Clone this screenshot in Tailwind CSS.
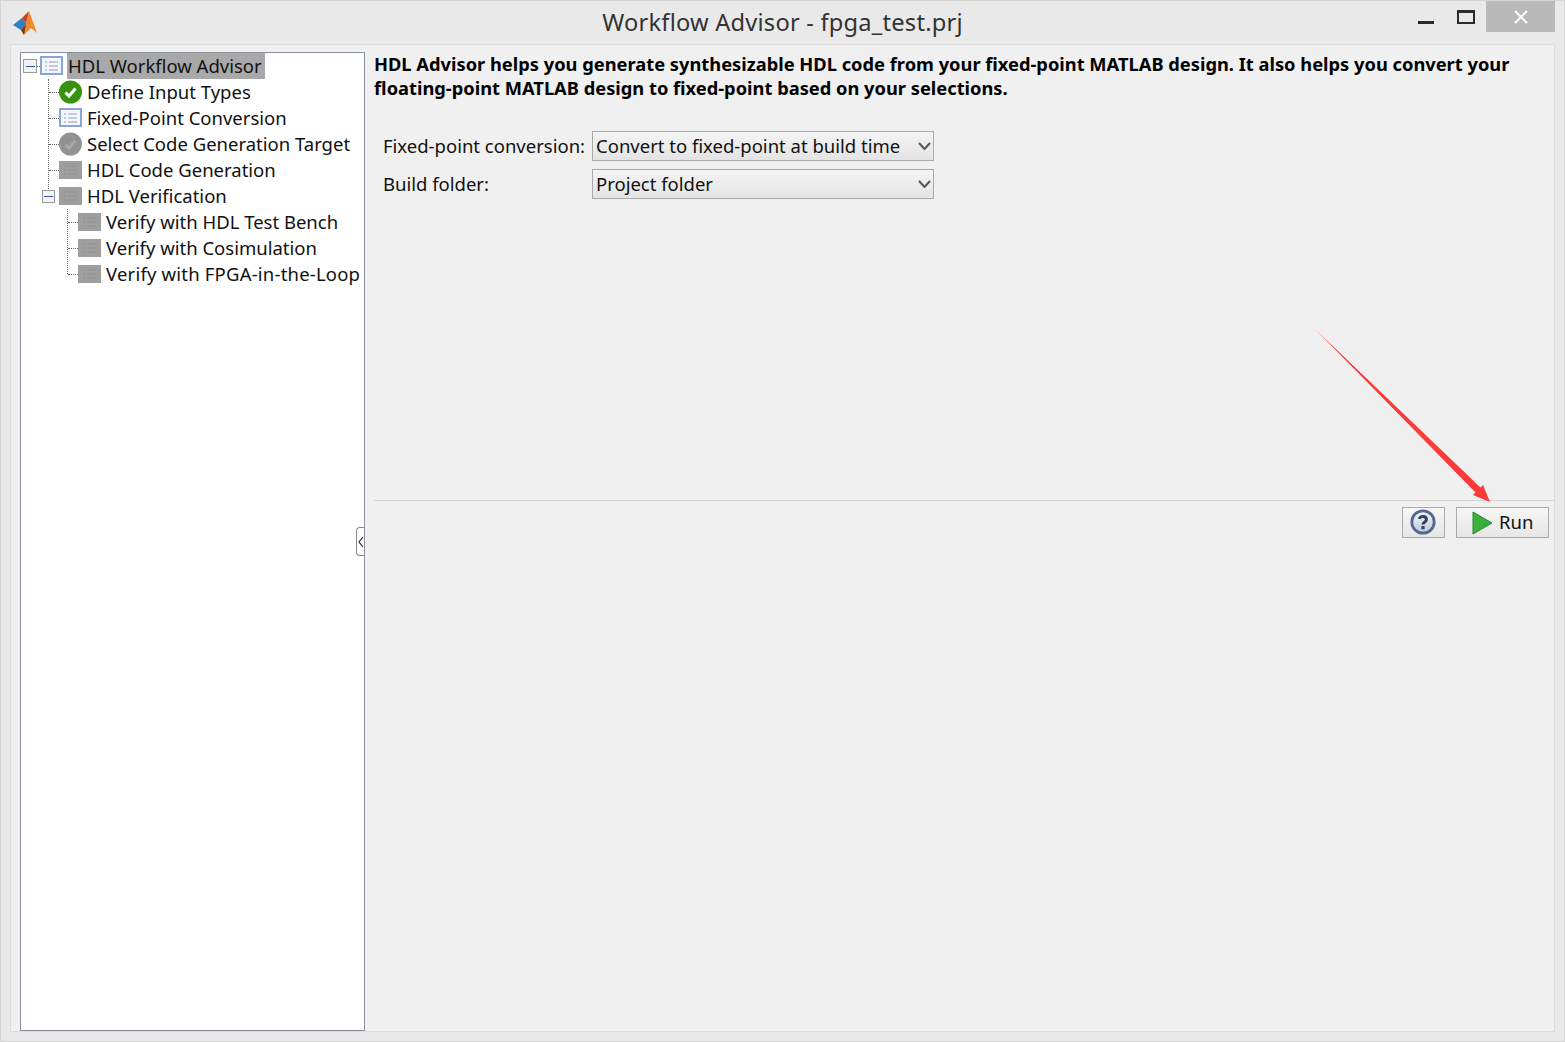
<!DOCTYPE html>
<html lang="en">
  <head>
    <meta charset="UTF-8" />
    <title>Workflow Advisor - fpga_test.prj</title>
    <script src="https://cdn.jsdelivr.net/npm/@tailwindcss/browser@4"></script>
  </head>
  <body class="overflow-hidden bg-[#e9e9e9]">
    <div class="relative h-[1042px] w-[1565px] border border-[#d4d4d4] bg-[#e9e9e9] font-['Noto_Sans',sans-serif] text-[#111]">
      <!-- title bar -->
      <div class="relative flex h-[43px] items-center justify-center">
        <svg class="absolute left-[11px] top-[9px] h-[26px] w-[26px] blur-[0.5px]" viewBox="0 0 26 26">
          <path d="M1 15 L10 8 L14 14 L9 20Z" fill="#2f7fc1" />
          <path d="M10 8 L17 1 L14 14Z" fill="#c9421d" />
          <path d="M17 1 L25 23 L19 18 L12 25 L9 20 L14 14Z" fill="#ef8a2c" />
          <path d="M14 14 L12 25 L9 20Z" fill="#7a3a22" />
        </svg>
        <span class="whitespace-nowrap text-[23.7px] leading-none tracking-[0.2px] text-[#333]">Workflow Advisor - fpga_test.prj</span>
        <div class="absolute right-[130px] top-[20px] h-[3px] w-[16px] bg-[#2b2b2b]"></div>
        <div class="absolute right-[89px] top-[9px] h-[14px] w-[18px] border-2 border-t-[3px] border-[#2b2b2b]"></div>
        <div class="absolute right-[9px] top-0 flex h-[31px] w-[69px] items-center justify-center bg-[#b9b9b9]">
          <svg class="h-[14px] w-[14px]" viewBox="0 0 14 14"><path d="M1 1 L13 13 M13 1 L1 13" stroke="#fff" stroke-width="2" /></svg>
        </div>
      </div>

      <!-- client area -->
      <div class="relative mx-[9px] flex h-[988px] w-[1545px] border border-[#dcdcdc] bg-[#f0f0f0] pl-[9px]">
        <!-- tree -->
        <div class="relative mt-[7px] h-[979px] w-[345px] shrink-0 whitespace-nowrap border border-[#8a9099] bg-white text-[18.5px] leading-none">
          <div class="absolute left-[27px] top-[26px] h-[118px] border-l border-dotted border-[#666]"></div>
          <div class="absolute left-[46px] top-[156px] h-[65px] border-l border-dotted border-[#666]"></div>

          <div class="relative flex h-[26px] items-center pl-[2px]">
            <div class="flex h-[14px] w-[14px] items-center justify-center border border-[#9a9a9a] bg-[#f4f4f4]"><div class="h-px w-[9px] bg-[#2f56a8]"></div></div>
            <div class="w-[3px] border-t border-dotted border-[#666]"></div>
            <svg class="h-[20px] w-[24px] blur-[0.3px]" viewBox="0 0 24 20"><rect x="1" y="1" width="21" height="17" fill="#f3f6fc" stroke="#8ba5d6" stroke-width="2" /><path d="M5 6h2M5 10h2M5 14h2M9 6h9M9 10h9M9 14h9" stroke="#c3cbdb" stroke-width="2" /></svg>
            <span class="ml-[3px] flex h-[26px] items-center bg-[#a9a9a9] pl-[1px] pr-[3px]">HDL Workflow Advisor</span>
          </div>

          <div class="relative flex h-[26px] items-center pl-[28px]">
            <div class="w-[10px] border-t border-dotted border-[#666]"></div>
            <svg class="h-[24px] w-[24px] blur-[0.3px]" viewBox="0 0 24 24"><circle cx="11.5" cy="12" r="11.5" fill="#37930f" /><path d="M6.5 12.5 L10 16 L16.5 8.5" fill="none" stroke="#fff" stroke-width="3" /></svg>
            <span class="ml-[4px]">Define Input Types</span>
          </div>

          <div class="relative flex h-[26px] items-center pl-[28px]">
            <div class="w-[10px] border-t border-dotted border-[#666]"></div>
            <svg class="h-[20px] w-[24px] blur-[0.3px]" viewBox="0 0 24 20"><rect x="1" y="1" width="21" height="17" fill="#f3f6fc" stroke="#8ba5d6" stroke-width="2" /><path d="M5 6h2M5 10h2M5 14h2M9 6h9M9 10h9M9 14h9" stroke="#c3cbdb" stroke-width="2" /></svg>
            <span class="ml-[4px]">Fixed-Point Conversion</span>
          </div>

          <div class="relative flex h-[26px] items-center pl-[28px]">
            <div class="w-[10px] border-t border-dotted border-[#666]"></div>
            <svg class="h-[24px] w-[24px] blur-[0.3px]" viewBox="0 0 24 24"><circle cx="11.5" cy="12" r="11.5" fill="#929292" /><path d="M6.5 12.5 L10 16 L16.5 8.5" fill="none" stroke="#a8a8a8" stroke-width="3" /></svg>
            <span class="ml-[4px]">Select Code Generation Target</span>
          </div>

          <div class="relative flex h-[26px] items-center pl-[28px]">
            <div class="w-[10px] border-t border-dotted border-[#666]"></div>
            <svg class="h-[20px] w-[24px] blur-[0.3px]" viewBox="0 0 24 20"><rect x="0" y="1" width="23" height="18" fill="#9e9e9e" /><path d="M5 6h2M5 10h2M5 14h2M9 6h9M9 10h9M9 14h9" stroke="#979797" stroke-width="2" /></svg>
            <span class="ml-[4px]">HDL Code Generation</span>
          </div>

          <div class="relative flex h-[26px] items-center pl-[21px]">
            <div class="flex h-[13px] w-[13px] items-center justify-center border border-[#9a9a9a] bg-[#f4f4f4]"><div class="h-px w-[9px] bg-[#2f56a8]"></div></div>
            <div class="w-[4px]"></div>
            <svg class="h-[20px] w-[24px] blur-[0.3px]" viewBox="0 0 24 20"><rect x="0" y="1" width="23" height="18" fill="#9e9e9e" /><path d="M5 6h2M5 10h2M5 14h2M9 6h9M9 10h9M9 14h9" stroke="#979797" stroke-width="2" /></svg>
            <span class="ml-[4px]">HDL Verification</span>
          </div>

          <div class="relative flex h-[26px] items-center pl-[47px]">
            <div class="w-[10px] border-t border-dotted border-[#666]"></div>
            <svg class="h-[20px] w-[24px] blur-[0.3px]" viewBox="0 0 24 20"><rect x="0" y="1" width="23" height="18" fill="#9e9e9e" /><path d="M5 6h2M5 10h2M5 14h2M9 6h9M9 10h9M9 14h9" stroke="#979797" stroke-width="2" /></svg>
            <span class="ml-[4px]">Verify with HDL Test Bench</span>
          </div>

          <div class="relative flex h-[26px] items-center pl-[47px]">
            <div class="w-[10px] border-t border-dotted border-[#666]"></div>
            <svg class="h-[20px] w-[24px] blur-[0.3px]" viewBox="0 0 24 20"><rect x="0" y="1" width="23" height="18" fill="#9e9e9e" /><path d="M5 6h2M5 10h2M5 14h2M9 6h9M9 10h9M9 14h9" stroke="#979797" stroke-width="2" /></svg>
            <span class="ml-[4px]">Verify with Cosimulation</span>
          </div>

          <div class="relative flex h-[26px] items-center pl-[47px]">
            <div class="w-[10px] border-t border-dotted border-[#666]"></div>
            <svg class="h-[20px] w-[24px] blur-[0.3px]" viewBox="0 0 24 20"><rect x="0" y="1" width="23" height="18" fill="#9e9e9e" /><path d="M5 6h2M5 10h2M5 14h2M9 6h9M9 10h9M9 14h9" stroke="#979797" stroke-width="2" /></svg>
            <span class="ml-[4px] tracking-[0.2px]">Verify with FPGA-in-the-Loop</span>
          </div>

          <!-- splitter handle -->
          <div class="absolute right-0 top-[474px] flex h-[29px] w-[8px] items-center justify-center rounded-l-[4px] border border-r-0 border-[#888] bg-white">
            <svg class="h-[12px] w-[6px]" viewBox="0 0 6 12"><path d="M5 1 L1 6 L5 11" fill="none" stroke="#222" stroke-width="1.2" /></svg>
          </div>
        </div>

        <!-- right side -->
        <div class="flex min-w-0 flex-1 flex-col pl-[9px]">
          <p class="mt-[7px] h-[48px] w-[1150px] text-[18.3px] font-bold leading-[24px] text-black">HDL Advisor helps you generate synthesizable HDL code from your fixed-point MATLAB design. It also helps you convert your floating-point MATLAB design to fixed-point based on your selections.</p>

          <div class="mt-[31px] flex flex-col gap-[8px] whitespace-nowrap pl-[9px] text-[18.5px] leading-none">
            <div class="flex h-[30px] items-center">
              <span class="w-[209px] shrink-0">Fixed-point conversion:</span>
              <div class="flex h-[30px] w-[342px] items-center justify-between border border-[#aaa] bg-linear-to-b from-[#f4f4f4] to-[#e4e4e4] pl-[3px] pr-[2px]">
                <span>Convert to fixed-point at build time</span>
                <svg class="h-[8px] w-[13px]" viewBox="0 0 13 8"><path d="M1 1 L6.5 7 L12 1" fill="none" stroke="#555" stroke-width="2" /></svg>
              </div>
            </div>
            <div class="flex h-[30px] items-center">
              <span class="w-[209px] shrink-0">Build folder:</span>
              <div class="flex h-[30px] w-[342px] items-center justify-between border border-[#aaa] bg-linear-to-b from-[#f4f4f4] to-[#e4e4e4] pl-[3px] pr-[2px]">
                <span>Project folder</span>
                <svg class="h-[8px] w-[13px]" viewBox="0 0 13 8"><path d="M1 1 L6.5 7 L12 1" fill="none" stroke="#555" stroke-width="2" /></svg>
              </div>
            </div>
          </div>

          <div class="mt-[301px] h-px bg-[#d4d4d4]"></div>

          <div class="mt-[6px] flex justify-end gap-[11px] pr-[5px]">
            <div class="flex h-[31px] w-[43px] items-center justify-center border border-[#aaa] bg-linear-to-b from-[#f6f6f6] to-[#e6e6e6]">
              <svg class="mb-[1px] mr-[1px] h-[26px] w-[26px] blur-[0.3px]" viewBox="0 0 26 26">
                <defs>
                  <linearGradient id="helpFill" x1="0" y1="0" x2="0" y2="1"><stop offset="0" stop-color="#f4f7fa" /><stop offset="1" stop-color="#b9c9d8" /></linearGradient>
                </defs>
                <circle cx="13" cy="13" r="11.2" fill="url(#helpFill)" stroke="#4f6a8c" stroke-width="2.8" />
                <path d="M9.5 10 C9.5 6.5 16.5 6.5 16.5 10.5 C16.5 13 13 13 13 15.5" fill="none" stroke="#34445a" stroke-width="3" />
                <rect x="11.4" y="17" width="3.2" height="3.2" fill="#34445a" />
              </svg>
            </div>
            <div class="flex h-[31px] w-[93px] items-center border border-[#aaa] bg-linear-to-b from-[#f6f6f6] to-[#e6e6e6] pl-[15px] text-[18.5px] leading-none">
              <svg class="h-[24px] w-[21px]" viewBox="0 0 21 24"><path d="M1 1 L20 12 L1 23Z" fill="#39b039" stroke="#2a8a2a" /></svg>
              <span class="ml-[6px]">Run</span>
            </div>
          </div>
        </div>
      </div>

      <!-- red annotation arrow -->
      <svg class="absolute left-[1310px] top-[325px] h-[180px] w-[185px]" viewBox="0 0 185 180">
        <path d="M5 4 L169.5 161.5 L172 159 L179 176 L162 169 L164.5 166.5 Z" fill="#fb3b3b" />
      </svg>
    </div>
  </body>
</html>
